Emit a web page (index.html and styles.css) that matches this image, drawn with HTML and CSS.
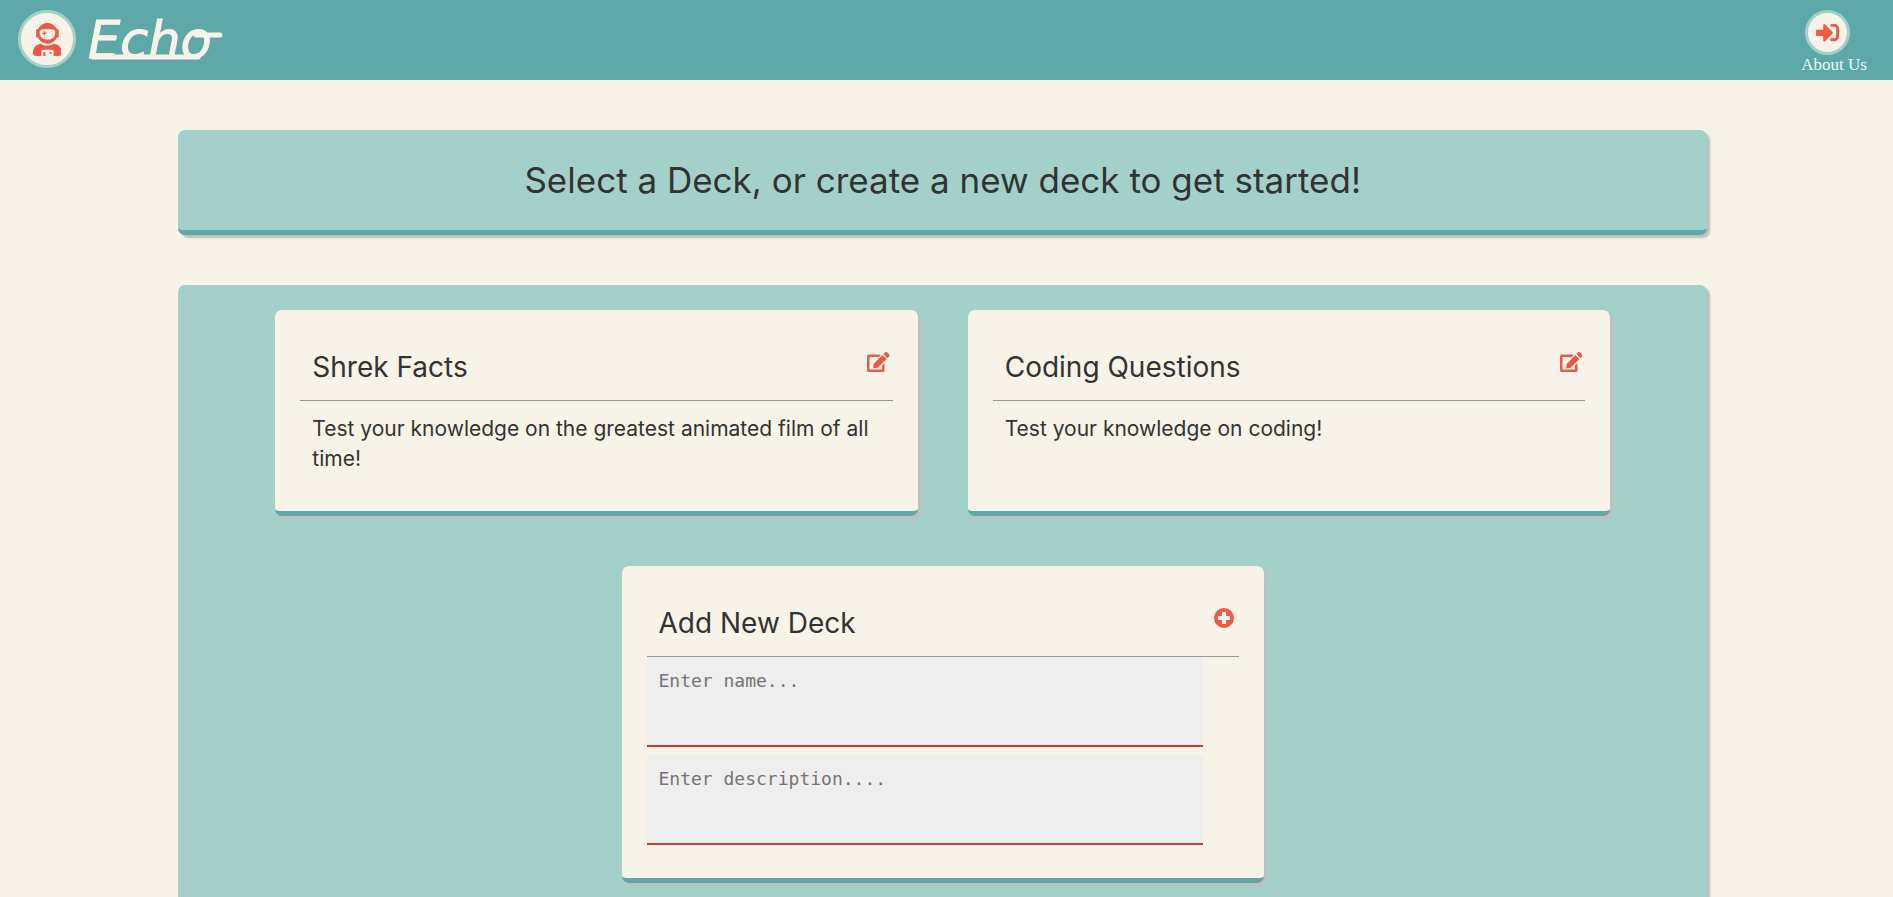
FILE: index.html
```html
<!DOCTYPE html>
<html lang="en">
<head>
<meta charset="utf-8">
<title>Echo</title>
<link rel="stylesheet" href="styles.css">
</head>
<body>
<header class="topbar">
  <a class="brand" href="#">
    <span class="badge badge-large">
      <svg class="icon-astronaut" viewBox="0 0 448 512" aria-hidden="true"><path d="M64 224h13.5c24.7 56.5 80.9 96 146.5 96s121.8-39.5 146.5-96H384c8.8 0 16-7.2 16-16v-96c0-8.8-7.2-16-16-16h-13.5C345.8 39.5 289.6 0 224 0S102.2 39.5 77.5 96H64c-8.8 0-16 7.2-16 16v96c0 8.8 7.2 16 16 16zm40-88c0-22.1 21.5-40 48-40h144c26.5 0 48 17.9 48 40v24c0 53-43 96-96 96h-48c-53 0-96-43-96-96v-24zm72 72l12-36 36-12-36-12-12-36-12 36-36 12 36 12 12 36zm151.6 113.4C297.7 340.7 262.2 352 224 352s-73.7-11.3-103.6-30.6C52.9 328.5 0 385 0 454.4v9.6c0 26.5 21.5 48 48 48h80v-64c0-17.7 14.3-32 32-32h128c17.7 0 32 14.3 32 32v64h80c26.5 0 48-21.5 48-48v-9.6c0-69.4-52.9-125.9-120.4-133zM272 448c-8.8 0-16 7.2-16 16s7.2 16 16 16 16-7.2 16-16-7.2-16-16-16zm-96 0c-8.8 0-16 7.2-16 16v48h32v-48c0-8.8-7.2-16-16-16z"/></svg>
    </span>
    <span class="wordmark">Echo
      <svg class="flourish" viewBox="0 0 140 80" aria-hidden="true"><path d="M5 57H110M108 35H132"/></svg>
    </span>
  </a>
  <a class="about" href="#">
    <span class="badge badge-small">
      <svg class="icon-enter" viewBox="0 0 512 512" aria-hidden="true"><path d="M416 448h-84c-6.6 0-12-5.4-12-12v-40c0-6.6 5.4-12 12-12h84c17.7 0 32-14.3 32-32V160c0-17.7-14.3-32-32-32h-84c-6.6 0-12-5.4-12-12V76c0-6.6 5.4-12 12-12h84c53 0 96 43 96 96v192c0 53-43 96-96 96zm-47-201L201 79c-15-15-41-4.5-41 17v96H24c-13.3 0-24 10.7-24 24v96c0 13.3 10.7 24 24 24h136v96c0 21.5 26 32 41 17l168-168c9.3-9.4 9.3-24.6 0-34z"/></svg>
    </span>
    <span>About Us</span>
  </a>
</header>

<main class="page">
  <section class="banner">
    <h1 class="banner-title">Select a Deck, or create a new deck to get started!</h1>
  </section>

  <section class="decks">
    <article class="card">
      <div class="card-head">
        <h2 class="card-title">Shrek Facts</h2>
        <button class="icon-button" type="button" aria-label="Edit Shrek Facts">
          <svg class="icon-edit" viewBox="0 0 576 512" aria-hidden="true"><path d="M402.6 83.2l90.2 90.2c3.8 3.8 3.8 10 0 13.8L274.4 405.6l-92.8 10.3c-12.4 1.4-22.9-9.1-21.5-21.5l10.3-92.8L388.8 83.2c3.8-3.8 10-3.8 13.8 0zm162-22.9l-48.8-48.8c-15.2-15.2-39.9-15.2-55.2 0l-35.4 35.4c-3.8 3.8-3.8 10 0 13.8l90.2 90.2c3.8 3.8 10 3.8 13.8 0l35.4-35.4c15.2-15.3 15.2-40 0-55.2zM384 346.2V448H64V128h229.8c3.2 0 6.2-1.3 8.5-3.5l40-40c7.6-7.6 2.2-20.5-8.5-20.5H48C21.5 64 0 85.5 0 112v352c0 26.5 21.5 48 48 48h352c26.5 0 48-21.5 48-48V306.2c0-10.7-12.9-16-20.5-8.5l-40 40c-2.2 2.3-3.5 5.3-3.5 8.5z"/></svg>
        </button>
      </div>
      <p class="card-text">Test your knowledge on the greatest animated film of all time!</p>
    </article>

    <article class="card">
      <div class="card-head">
        <h2 class="card-title">Coding Questions</h2>
        <button class="icon-button" type="button" aria-label="Edit Coding Questions">
          <svg class="icon-edit" viewBox="0 0 576 512" aria-hidden="true"><path d="M402.6 83.2l90.2 90.2c3.8 3.8 3.8 10 0 13.8L274.4 405.6l-92.8 10.3c-12.4 1.4-22.9-9.1-21.5-21.5l10.3-92.8L388.8 83.2c3.8-3.8 10-3.8 13.8 0zm162-22.9l-48.8-48.8c-15.2-15.2-39.9-15.2-55.2 0l-35.4 35.4c-3.8 3.8-3.8 10 0 13.8l90.2 90.2c3.8 3.8 10 3.8 13.8 0l35.4-35.4c15.2-15.3 15.2-40 0-55.2zM384 346.2V448H64V128h229.8c3.2 0 6.2-1.3 8.5-3.5l40-40c7.6-7.6 2.2-20.5-8.5-20.5H48C21.5 64 0 85.5 0 112v352c0 26.5 21.5 48 48 48h352c26.5 0 48-21.5 48-48V306.2c0-10.7-12.9-16-20.5-8.5l-40 40c-2.2 2.3-3.5 5.3-3.5 8.5z"/></svg>
        </button>
      </div>
      <p class="card-text">Test your knowledge on coding!</p>
    </article>

    <form class="card">
      <div class="card-head">
        <h2 class="card-title">Add New Deck</h2>
        <button class="icon-button icon-button-add" type="button" aria-label="Add deck">
          <svg class="icon-plus" viewBox="0 0 20 20" aria-hidden="true"><path fill-rule="evenodd" d="M10 0a10 10 0 1 0 0 20a10 10 0 1 0 0-20zM8.6 4h2.8q.6 0 .6.6V8h3.400q.6 0 .6.6v2.800q0 .6-.6.6H12v3.400q0 .6-.6.6H8.600q-.6 0-.6-.6V12H4.600q-.6 0-.6-.6V8.600q0-.6.6-.6H8V4.600q0-.6.6-.6z"/></svg>
        </button>
      </div>
      <textarea class="field" aria-label="Deck name" placeholder="Enter name..."></textarea>
      <textarea class="field" aria-label="Deck description" placeholder="Enter description...."></textarea>
    </form>
  </section>
</main>
</body>
</html>
```
FILE: styles.css
```css
:root {
  --teal: #5ea9a8;
  --mint: #a3d1ca;
  --cream: #f7f3e8;
  --red: #ee5a48;
  --ink: #333333;
  --shadow: #bdbfbf;
}

* {
  box-sizing: border-box;
}

body {
  margin: 0;
  background: var(--cream);
  color: var(--ink);
  font-family: Inter, "Open Sans", sans-serif;
}

svg {
  display: block;
  fill: var(--red);
}

.topbar {
  display: flex;
  justify-content: space-between;
  align-items: flex-start;
  height: 80px;
  padding: 10px 26px 0 18px;
  background: var(--teal);
}

.brand {
  display: flex;
  align-items: center;
  gap: 12px;
  height: 58px;
  color: var(--cream);
  text-decoration: none;
}

.badge {
  display: flex;
  align-items: center;
  justify-content: center;
  border: 3px solid var(--mint);
  border-radius: 50%;
  background: var(--cream);
}

.badge-large {
  width: 58px;
  height: 58px;
}

.badge-small {
  width: 45px;
  height: 45px;
  margin-left: 4px;
}

.icon-astronaut {
  height: 33px;
}

.icon-enter {
  height: 23px;
}

.wordmark {
  position: relative;
  padding-top: 4px;
  font: italic 400 51px/60px "DejaVu Sans", sans-serif;
  -webkit-text-stroke: 1px var(--cream);
}

/* Pen strokes that tie the letters of the wordmark together */
.flourish {
  position: absolute;
  top: -7px;
  left: 0;
  width: 140px;
  fill: none;
  stroke: var(--cream);
  stroke-width: 5;
  stroke-linecap: round;
}

.about {
  display: flex;
  flex-direction: column;
  align-items: flex-start;
  color: #e8fafa;
  font: 17px/20px "Liberation Serif", serif;
  text-decoration: none;
}

.page {
  display: flex;
  flex-direction: column;
  gap: 50px;
  width: 80.8%;
  margin: 50px 0 50px 9.4%;
}

.banner,
.decks,
.card {
  border-bottom: 5px solid var(--teal);
  border-radius: 7px;
  box-shadow: 3px 3px 2px var(--shadow);
}

.banner {
  padding: 25px;
  background: var(--mint);
  text-align: center;
}

.banner-title {
  margin: 0;
  font-size: 35px;
  font-weight: 400;
  line-height: 50px;
}

.decks {
  display: flex;
  flex-wrap: wrap;
  justify-content: center;
  gap: 50px;
  padding: 25px 0;
  background: var(--mint);
}

.card {
  width: 42%;
  padding: 25px;
  background: var(--cream);
}

.card-head {
  display: flex;
  justify-content: space-between;
  align-items: flex-start;
  height: 66px;
  padding: 0 3px 0 12px;
  border-bottom: 1px solid #989890;
}

.card-title {
  margin: 0;
  font-size: 28px;
  font-weight: 400;
  line-height: 64px;
}

.icon-button {
  padding: 17px 0 0;
  border: 0;
  background: none;
  cursor: pointer;
}

.icon-button-add {
  padding-right: 2px;
}

.icon-edit,
.icon-plus {
  height: 20px;
}

.card-text {
  margin: 0;
  padding: 13px 12px 12px;
  font-size: 21px;
  line-height: 30px;
}

.field {
  display: block;
  width: 94%;
  height: 90px;
  margin-bottom: 8px;
  padding: 12px;
  border: 0;
  border-bottom: 2px solid #c23f33;
  background: #eeeeee;
  font: 18px/24px "DejaVu Sans Mono", monospace;
  resize: none;
}

.field::placeholder {
  color: #757575;
}
```
